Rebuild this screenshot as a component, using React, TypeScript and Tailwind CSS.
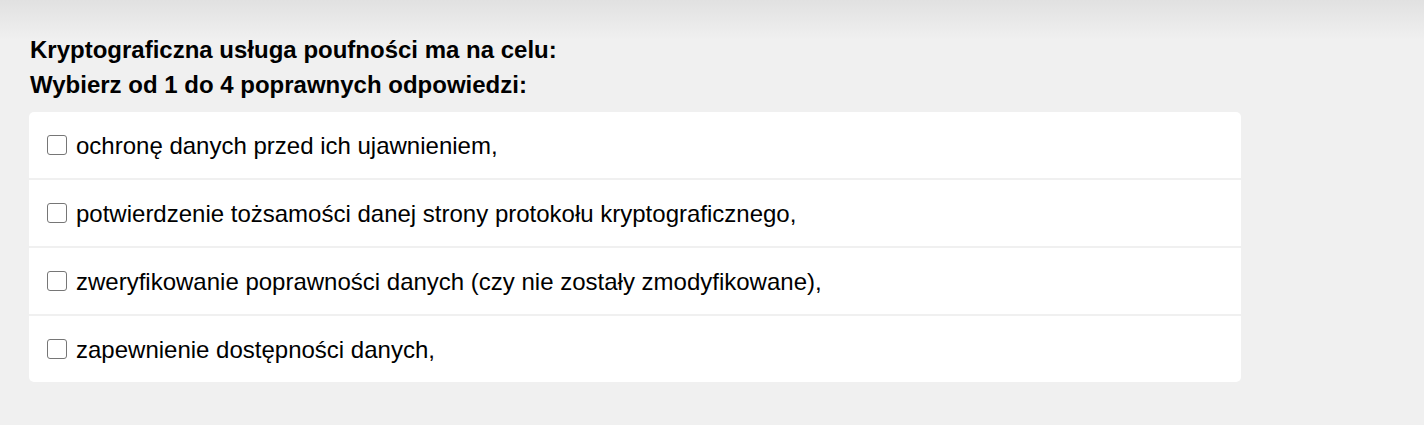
const options = [
  "ochronę danych przed ich ujawnieniem,",
  "potwierdzenie tożsamości danej strony protokołu kryptograficznego,",
  "zweryfikowanie poprawności danych (czy nie zostały zmodyfikowane),",
  "zapewnienie dostępności danych,",
];

export default function App() {
  return (
    <div
      className="min-h-[425px] w-full bg-[#f0f0f0] bg-[linear-gradient(to_bottom,#e1e1e1_0px,#f0f0f0_40px)] text-black"
      style={{ fontFamily: '"Liberation Sans", Arial, sans-serif' }}
    >
      <div className="pl-[29px] pt-[32px] w-[1241px]">
        <div className="text-[24px] font-bold leading-[35px] pl-px">
          <div>Kryptograficzna usługa poufności ma na celu:</div>
          <div>Wybierz od 1 do 4 poprawnych odpowiedzi:</div>
        </div>
        <div className="mt-[10px] flex flex-col gap-[2px] rounded-[5px] overflow-hidden">
          {options.map((o) => (
            <label key={o} className="flex h-[66px] items-center bg-white pl-[18px]">
              <span className="block h-[20px] w-[20px] rounded-[3px] border border-[#767676] bg-white" />
              <span className="ml-[9px] text-[24px] pt-px">{o}</span>
            </label>
          ))}
        </div>
      </div>
    </div>
  );
}
